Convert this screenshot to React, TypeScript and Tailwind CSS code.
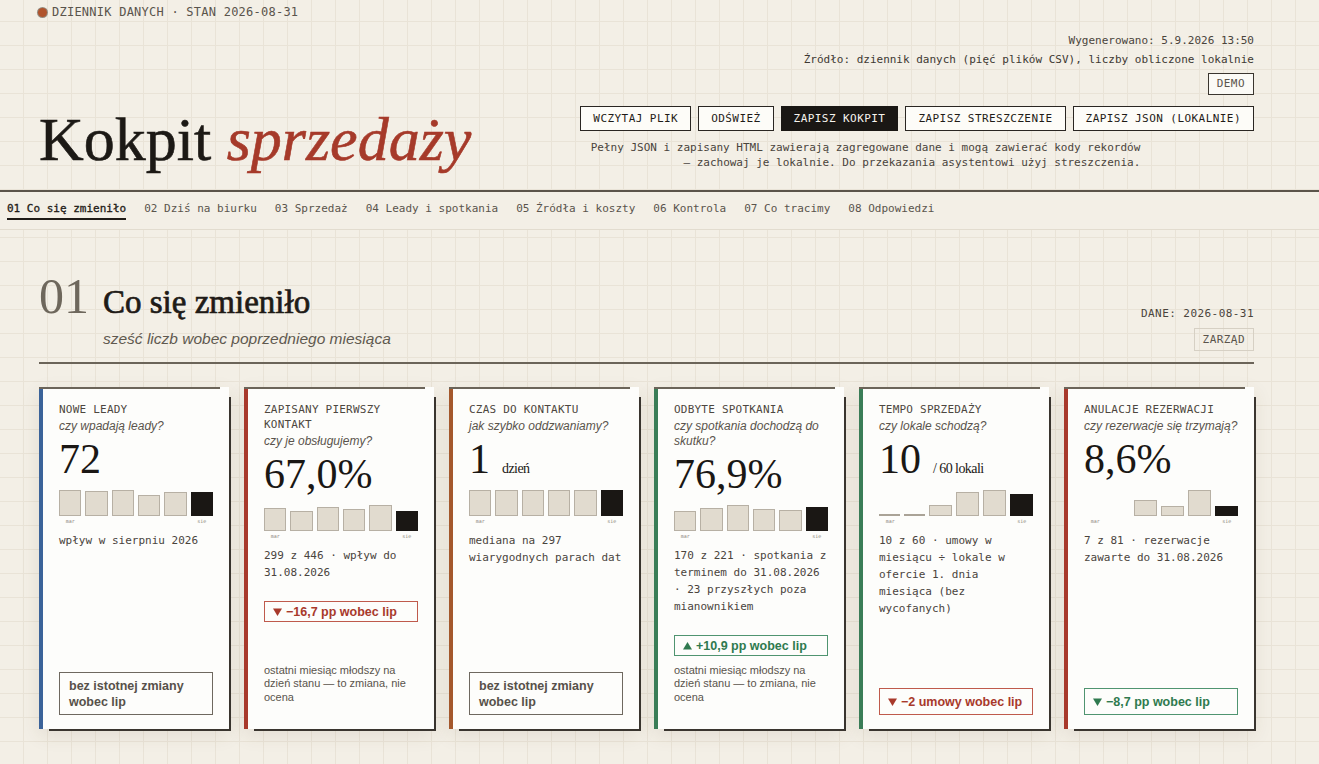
import React from 'react';

const MONO = "font-['DejaVu_Sans_Mono',monospace]";
const SERIF = "font-['Liberation_Serif',serif]";
const SANS = "font-['Liberation_Sans',Arial,sans-serif]";

type Tone = 'gray' | 'red' | 'green';

type Metric = {
  id: number;
  accent: string;
  label: string;
  question: string;
  value: string;
  unit?: string;
  bars: (number | null)[];
  desc: string;
  badge: { tone: Tone; dir?: 'up' | 'down'; text: string };
  note?: string;
};

const NOTE = 'ostatni miesiąc młodszy na dzień stanu — to zmiana, nie ocena';

const metrics: Metric[] = [
  {
    id: 1,
    accent: 'border-l-[#3b6399]',
    label: 'Nowe leady',
    question: 'czy wpadają leady?',
    value: '72',
    bars: [26, 25, 26, 21, 24, 24],
    desc: 'wpływ w sierpniu 2026',
    badge: { tone: 'gray', text: 'bez istotnej zmiany wobec lip' },
  },
  {
    id: 2,
    accent: 'border-l-[#a8392b]',
    label: 'Zapisany pierwszy kontakt',
    question: 'czy je obsługujemy?',
    value: '67,0%',
    bars: [23, 20, 24, 22, 26, 20],
    desc: '299 z 446 · wpływ do 31.08.2026',
    badge: { tone: 'red', dir: 'down', text: '−16,7 pp wobec lip' },
    note: NOTE,
  },
  {
    id: 3,
    accent: 'border-l-[#a4582c]',
    label: 'Czas do kontaktu',
    question: 'jak szybko oddzwaniamy?',
    value: '1',
    unit: 'dzień',
    bars: [26, 26, 26, 26, 26, 26],
    desc: 'mediana na 297 wiarygodnych parach dat',
    badge: { tone: 'gray', text: 'bez istotnej zmiany wobec lip' },
  },
  {
    id: 4,
    accent: 'border-l-[#3a7d57]',
    label: 'Odbyte spotkania',
    question: 'czy spotkania dochodzą do skutku?',
    value: '76,9%',
    bars: [20, 23, 26, 22, 21, 24],
    desc: '170 z 221 · spotkania z terminem do 31.08.2026 · 23 przyszłych poza mianownikiem',
    badge: { tone: 'green', dir: 'up', text: '+10,9 pp wobec lip' },
    note: NOTE,
  },
  {
    id: 5,
    accent: 'border-l-[#3a7d57]',
    label: 'Tempo sprzedaży',
    question: 'czy lokale schodzą?',
    value: '10',
    unit: '/ 60 lokali',
    bars: [0, 0, 11, 24, 26, 22],
    desc: '10 z 60 · umowy w miesiącu ÷ lokale w ofercie 1. dnia miesiąca (bez wycofanych)',
    badge: { tone: 'red', dir: 'down', text: '−2 umowy wobec lip' },
  },
  {
    id: 6,
    accent: 'border-l-[#a8392b]',
    label: 'Anulacje rezerwacji',
    question: 'czy rezerwacje się trzymają?',
    value: '8,6%',
    bars: [null, null, 16, 10, 26, 10],
    desc: '7 z 81 · rezerwacje zawarte do 31.08.2026',
    badge: { tone: 'green', dir: 'down', text: '−8,7 pp wobec lip' },
  },
];

const toneClass: Record<Tone, string> = {
  gray: 'border-[#6e685f] text-[#57514a]',
  red: 'border-[#bf5a4c] text-[#a8392b]',
  green: 'border-[#4f9470] text-[#2f7a4f]',
};

const navItems = [
  '01 Co się zmieniło',
  '02 Dziś na biurku',
  '03 Sprzedaż',
  '04 Leady i spotkania',
  '05 Źródła i koszty',
  '06 Kontrola',
  '07 Co tracimy',
  '08 Odpowiedzi',
];

const buttons = ['Wczytaj plik', 'Odśwież', 'Zapisz kokpit', 'Zapisz streszczenie', 'Zapisz JSON (lokalnie)'];

const Triangle = ({ dir }: { dir: 'up' | 'down' }) => (
  <svg width="9" height="8" viewBox="0 0 9 8" className="mr-[4px] inline-block align-[0px]" fill="currentColor">
    {dir === 'down' ? <path d="M0 0.5h9L4.5 8z" /> : <path d="M4.5 0L9 7.5H0z" />}
  </svg>
);

const Bars = ({ bars }: { bars: (number | null)[] }) => (
  <div className="mt-[10px]">
    <div className="flex h-[26px] items-end gap-[4px]">
      {bars.map((h, i) => {
        const last = i === bars.length - 1;
        if (h === null) return <div key={i} className="flex-1" />;
        if (h === 0) return <div key={i} className="h-[2px] flex-1 bg-[#aaa397]" />;
        return (
          <div
            key={i}
            className={
              last
                ? 'flex-1 border border-[#1a1714] bg-[#1a1714]'
                : 'flex-1 border border-[#b7b0a4] bg-[#e1dbcf]'
            }
            style={{ height: h }}
          />
        );
      })}
    </div>
    <div className={`mt-[2px] grid h-[7px] grid-cols-6 gap-[4px] text-center text-[5px] leading-[7px] text-[#8a8377] ${MONO}`}>
      <span>mar</span>
      <span />
      <span />
      <span />
      <span />
      <span>sie</span>
    </div>
  </div>
);

const Card = ({ m }: { m: Metric }) => {
  const inline = !!m.note;
  return (
    <div
      className={`relative flex h-[342px] flex-col border-l-4 bg-[#fdfdfb] px-[16px] pt-[15px] pb-[14px] shadow-[6px_6px_0_-4px_#3a352f,0_6px_18px_rgba(90,70,40,0.10)] ${m.accent}`}
    >
      <div className="absolute -left-[4px] right-[9px] top-0 h-[2px] bg-[#6b6459]" />
      <div className={`text-[11px] uppercase leading-[15px] tracking-[0.02em] text-[#4d4740] ${MONO}`}>{m.label}</div>
      <div className={`mt-[2px] text-[12px] italic leading-[15px] text-[#5a544c] ${SANS}`}>{m.question}</div>
      <div className={`mt-[4px] flex items-baseline text-[#1a1714] ${SERIF}`}>
        <span className="text-[42px] leading-[42px]">{m.value}</span>
        {m.unit && <span className="ml-[12px] text-[14px] tracking-[-0.04em]">{m.unit}</span>}
      </div>
      <Bars bars={m.bars} />
      <div className={`mt-[7px] text-[11px] leading-[17px] text-[#4a443d] ${MONO}`}>{m.desc}</div>
      <div
        className={`${inline ? 'mt-[20px] py-[1.5px]' : 'mt-auto py-[4.5px]'} ${m.badge.dir ? 'whitespace-nowrap px-[8px]' : 'px-[9px]'} border text-[12.5px] font-bold leading-[16px] ${SANS} ${toneClass[m.badge.tone]}`}
      >
        {m.badge.dir && <Triangle dir={m.badge.dir} />}
        {m.badge.text}
      </div>
      {m.note && (
        <div className={`mt-auto mb-[11px] text-[11px] leading-[13.5px] text-[#5a544c] ${SANS}`}>{m.note}</div>
      )}
    </div>
  );
};

export default function App() {
  return (
    <div
      className={`min-h-[764px] overflow-hidden bg-[#f3efe6] bg-[linear-gradient(to_right,#e9e3d7_1px,transparent_1px),linear-gradient(to_bottom,#e9e3d7_1px,transparent_1px)] bg-[size:24px_24px] bg-[position:-1px_-3px] text-[#1f1b17] ${MONO}`}
    >
      <header className="ml-[39px] w-[1215px]">
        <div className="flex items-center gap-[5px] pt-[4px]">
          <span className="-ml-[1px] h-[9px] w-[9px] rounded-full bg-[#b0532c] shadow-[0_0_0_1px_#958c80]" />
          <span className="text-[12px] leading-[16px] tracking-[0.02em] text-[#5a544c]">
            DZIENNIK DANYCH · STAN 2026-08-31
          </span>
        </div>
        <div className="mt-[10.5px] flex items-end justify-between pb-[20.5px]">
          <h1 className={`text-[62px] leading-none text-[#1c1915] [-webkit-text-stroke:0.6px_#1c1915] ${SERIF}`}>
            Kokpit{' '}
            <em className="italic text-[#a63a2a] [-webkit-text-stroke:0.6px_#a63a2a]">sprzedaży</em>
          </h1>
          <div className="flex flex-col items-end text-[11px]">
            <p className="leading-[19px] text-[#4a443c]">Wygenerowano: 5.9.2026 13:50</p>
            <p className="leading-[19px] text-[#3d3832]">
              Źródło: dziennik danych (pięć plików CSV), liczby obliczone lokalnie
            </p>
            <span className="mt-[4.5px] border border-[#3a352f] bg-[#fbfaf6] px-[8px] leading-[20px] tracking-[0.04em] text-[#5a544c]">
              DEMO
            </span>
            <div className="mt-[11px] flex gap-[7px]">
              {buttons.map((b) => (
                <button
                  key={b}
                  className={
                    b === 'Zapisz kokpit'
                      ? 'border border-[#1a1714] bg-[#1a1714] px-[12px] py-[3px] uppercase leading-[17px] tracking-[0.04em] text-[#f7f4ee]'
                      : 'border border-[#2a2622] bg-[#fdfcf8] px-[12px] py-[3px] uppercase leading-[17px] tracking-[0.04em] text-[#1f1b17]'
                  }
                >
                  {b}
                </button>
              ))}
            </div>
            <p className="mt-[8.5px] w-[560px] self-start text-right leading-[15px] text-[#4a443c]">
              Pełny JSON i zapisany HTML zawierają zagregowane dane i mogą zawierać kody rekordów — zachowaj je
              lokalnie. Do przekazania asystentowi użyj streszczenia.
            </p>
          </div>
        </div>
      </header>

      <nav className="flex gap-[18px] border-t-2 border-b border-t-[#5b544a] border-b-[#e2dccf] bg-[#f3efe6] pt-[8px] pb-[9px] pl-[7px] text-[11px]">
        {navItems.map((n, i) => (
          <span
            key={n}
            className={
              i === 0
                ? 'border-b-2 border-[#1f1b17] pb-[1px] leading-[17px] text-[#1f1b17] [-webkit-text-stroke:0.3px_#1f1b17]'
                : 'border-b-2 border-transparent pb-[1px] leading-[17px] text-[#5a544c]'
            }
          >
            {n}
          </span>
        ))}
      </nav>

      <main className="ml-[39px] w-[1215px] pt-[41px]">
        <section>
          <div className="flex items-end justify-between border-b-2 border-[#6b6459] pb-[11px]">
            <div className="flex items-start">
              <span className={`text-[50px] leading-none text-[#6e675c] ${SERIF}`}>01</span>
              <div className="ml-[14px] mt-[13px] mb-[2px]">
                <h2
                  className={`text-[33px] leading-[36px] text-[#1f1b17] [-webkit-text-stroke:0.7px_#1f1b17] ${SERIF}`}
                >
                  Co się zmieniło
                </h2>
                <p className={`mt-[9px] text-[15.5px] italic leading-[20px] text-[#5f594f] ${SANS}`}>
                  sześć liczb wobec poprzedniego miesiąca
                </p>
              </div>
            </div>
            <div className="flex flex-col items-end text-[11px] tracking-[0.04em]">
              <span className="leading-[16px] text-[#4a443c]">DANE: 2026-08-31</span>
              <span className="mt-[6px] border border-[#d6d0c4] px-[8px] leading-[21px] text-[#5a544c]">ZARZĄD</span>
            </div>
          </div>

          <div className="mt-[23px] grid grid-cols-6 gap-[15px]">
            {metrics.map((m) => (
              <Card key={m.id} m={m} />
            ))}
          </div>
        </section>
      </main>
    </div>
  );
}
